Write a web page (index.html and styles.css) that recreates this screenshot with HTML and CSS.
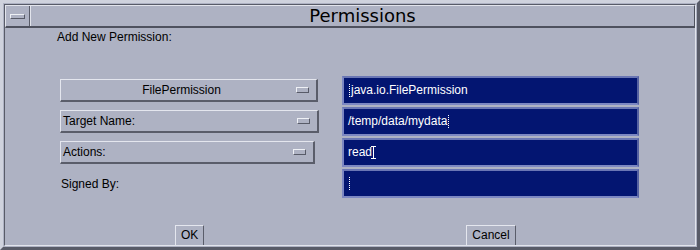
FILE: index.html
```html
<!DOCTYPE html>
<html lang="en">
<head>
	<meta charset="UTF-8">
	<title>Permissions</title>
	<link rel="stylesheet" href="styles.css">
</head>
<body>

	<div class="window">
		<div class="inner">
			<div class="titlebar">
				<div class="menu-box"><span class="menu-btn"></span></div>
				<h1 class="title">Permissions</h1>
			</div>

			<div class="content">
				<p class="heading">Add New Permission:</p>

				<div class="form">
					<div class="choice choice-center">FilePermission<span class="knob"></span></div>
					<div class="field"><span class="caret"></span>java.io.FilePermission</div>

					<div class="choice choice-wide">Target Name:<span class="knob"></span></div>
					<div class="field">/temp/data/mydata<span class="caret"></span></div>

					<div class="choice choice-short">Actions:<span class="knob"></span></div>
					<div class="field">read<span class="ibeam"></span></div>

					<div class="label">Signed By:</div>
					<div class="field"><span class="caret"></span></div>
				</div>
			</div>

			<div class="buttons">
				<div class="btn">OK</div>
				<div class="btn">Cancel</div>
			</div>
		</div>
	</div>

</body>
</html>
```

FILE: styles.css
```css
body {
	margin: 0;
	padding: 0;
	font-family: "Liberation Sans", Arial, sans-serif;
	font-size: 12px;
	color: #000;
}
.window {
	width: 700px;
	height: 250px;
	box-sizing: border-box;
	background-color: #aeb2c3;
	border: 3px solid;
	border-color: #cfd2dd #585b68 #585b68 #cfd2dd;
	padding: 1px;
	display: flex;
}
.inner {
	flex: 1;
	display: flex;
	flex-direction: column;
	border: 1px solid;
	border-color: #585b68 #e2e4ec #e2e4ec #585b68;
}
/* title bar */
.titlebar {
	display: flex;
	height: 23px;
	box-sizing: border-box;
	border: 1px solid;
	border-color: #e2e4ec #4e515e #4e515e #e2e4ec;
	border-bottom-width: 2px;
}
.menu-box {
	width: 23px;
	display: flex;
	align-items: center;
	justify-content: center;
	border-right: 1px solid #585b68;
	box-shadow: 1px 0 0 #e2e4ec;
}
.menu-btn {
	width: 13px;
	height: 3px;
	border: 1px solid;
	border-color: #eef0f5 #585b68 #585b68 #eef0f5;
}
.title {
	flex: 1;
	margin: 0;
	text-align: center;
	font-family: "DejaVu Sans", sans-serif;
	font-weight: normal;
	font-size: 18px;
	line-height: 20px;
	margin-left: 1px;
}
/* body */
.content {
	padding: 2px 0 0 52px;
}
.heading {
	margin: 0;
	line-height: 14px;
}
.form {
	margin: 32px 0 0 3px;
	display: grid;
	grid-template-columns: 259px 297px;
	grid-auto-rows: 29px;
	column-gap: 23px;
	row-gap: 2px;
	align-items: center;
}
.choice {
	position: relative;
	height: 23px;
	box-sizing: border-box;
	border: 1px solid;
	border-color: #e4e6ee #5a5d6a #5a5d6a #e4e6ee;
	border-width: 1px 2px 2px 1px;
	padding-left: 2px;
	line-height: 20px;
}
.choice-center {
	width: 258px;
	text-align: center;
	padding-right: 16px;
}
.choice-short {
	width: 255px;
}
.knob {
	position: absolute;
	right: 7px;
	top: 7px;
	width: 11px;
	height: 4px;
	border: 1px solid;
	border-color: #eef0f5 #585b68 #585b68 #eef0f5;
}
.label {
	padding-left: 1px;
}
.field {
	height: 29px;
	box-sizing: border-box;
	background-color: #031571;
	border: 2px solid;
	border-color: #6a76b4 #5662a2 #7c87c2 #7c87c2;
	color: #fff;
	padding-left: 4px;
	line-height: 25px;
	display: flex;
	align-items: center;
}
.caret {
	display: inline-block;
	width: 0;
	height: 13px;
	border-left: 1px dotted #fff;
	margin: 0 1px;
}
.ibeam {
	display: inline-block;
	width: 5px;
	height: 13px;
	position: relative;
	border-top: 1px solid #fff;
	border-bottom: 1px solid #fff;
	box-sizing: border-box;
	margin-left: -1px;
	background: linear-gradient(#fff, #fff) center / 1px 100% no-repeat;
}
/* buttons */
.buttons {
	margin-top: auto;
	display: flex;
	align-items: flex-end;
	padding-left: 170px;
	gap: 262px;
}
.btn {
	height: 20px;
	box-sizing: border-box;
	border: 1px solid;
	border-color: #e4e6ee #5a5d6a transparent #e4e6ee;
	border-bottom: none;
	padding: 0 5px;
	line-height: 19px;
}
```
